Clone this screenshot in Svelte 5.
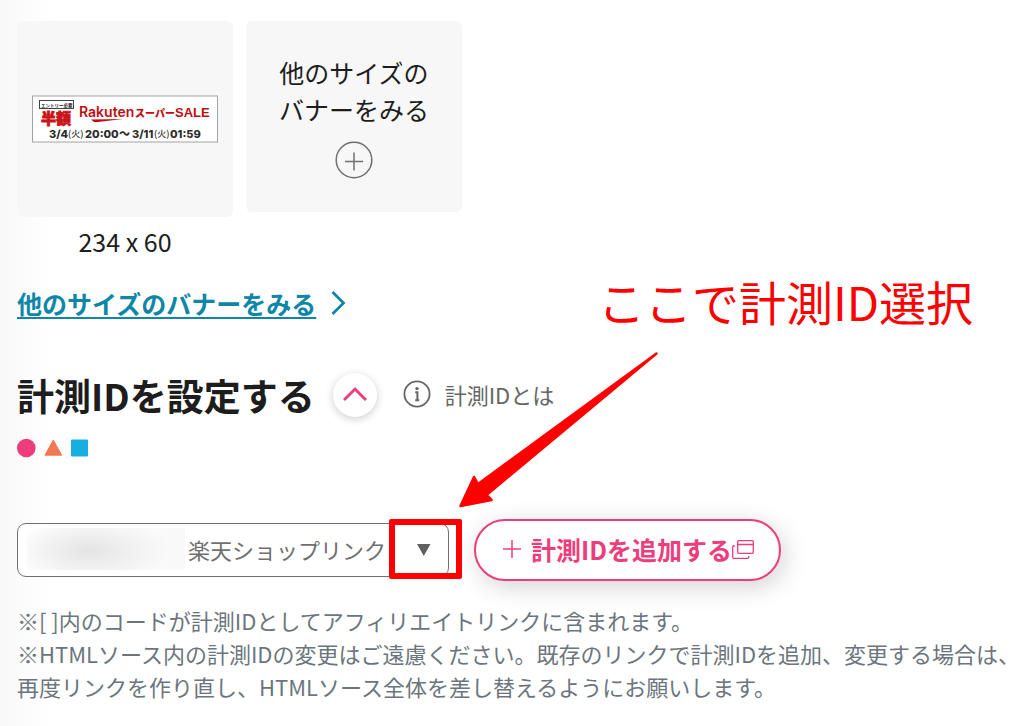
<script>
  let selected = $state('shop');
  let open = $state(true);
</script>

<main class="page">
  <section class="banners">
    <figure class="banner">
      <div class="card preview">
        <svg class="sale" width="186" height="48" viewBox="0 0 186 48" role="img" aria-label="Rakuten スーパーSALE">
          <rect x=".5" y="1" width="185" height="46" fill="#fff" stroke="#a3a3a3" />
          <rect x="7.5" y="5.500" width="34" height="8" fill="#fff" stroke="#444" />
          <text x="9" y="11.500" font-size="4.500" font-weight="700" fill="#222">エントリー必要</text>
          <text x="9" y="29" font-size="15" font-weight="900" fill="#c8141a" stroke="#c8141a" stroke-width=".8">半額</text>
          <text class="latin" x="47" y="22" font-size="14" font-weight="600" fill="#c00d12">Rakuten</text>
          <path d="M59 24.500 L91 24 L66 27 L62 27 Z" fill="#c00d12" />
          <text x="103" y="22" font-size="10" font-weight="900" fill="#c00d12">スーパー</text>
          <text class="arial" x="143" y="22" font-size="13" font-weight="700" fill="#c00d12">SALE</text>
          <g class="latin" font-size="11" font-weight="800" fill="#2d2d2d">
            <text x="17" y="43">3/4</text>
            <text x="53" y="43">20:00</text>
            <text x="87" y="43">〜</text>
            <text x="100" y="43">3/11</text>
            <text x="138" y="43">01:59</text>
          </g>
          <g font-size="9" font-weight="500" fill="#2d2d2d">
            <text x="36" y="42">(火)</text>
            <text x="122" y="42">(火)</text>
          </g>
        </svg>
      </div>
      <figcaption>234 x 60</figcaption>
    </figure>
    <button class="card more" type="button">
      <span>他のサイズの<br />バナーをみる</span>
      <svg width="38" height="38" viewBox="0 0 38 38" fill="none" stroke="#707070" stroke-width="1.500" aria-hidden="true">
        <circle cx="19" cy="19" r="17.800" />
        <path d="M10 20.500h18M19 11.500v18" />
      </svg>
    </button>
  </section>

  <a class="sizes" href="#sizes">
    <span>他のサイズのバナーをみる</span>
    <svg width="16" height="26" viewBox="0 0 16 26" fill="none" stroke="#0e86a8" stroke-width="2.800" aria-hidden="true">
      <path d="M2.500 2 13.500 13 2.500 24" />
    </svg>
  </a>

  <header class="heading">
    <h2>計測IDを設定する</h2>
    <button class="toggle" type="button" aria-label="開閉" aria-expanded={open} onclick={() => (open = !open)}>
      <svg width="24" height="16" viewBox="0 0 24 16" fill="none" stroke="#f03c80" stroke-width="3" aria-hidden="true">
        <path d="M1 14 12 3 23 14" />
      </svg>
    </button>
    <a class="about" href="#about">
      <svg width="28" height="28" viewBox="0 0 28 28" aria-hidden="true">
        <circle cx="14" cy="14" r="12.600" fill="none" stroke="#666" stroke-width="1.800" />
        <circle cx="14" cy="8.600" r="1.700" fill="#666" />
        <path d="M12.200 12.300h2.200v8M12.200 20.300h4" fill="none" stroke="#666" stroke-width="2" />
      </svg>
      計測IDとは
    </a>
  </header>

  <svg class="shapes" width="72" height="20" viewBox="0 0 72 20" aria-hidden="true">
    <circle cx="9.300" cy="10" r="9.300" fill="#ee3d7c" />
    <path d="M36.300 2.500 44.300 17H28.300Z" fill="#f07855" stroke="#f07855" stroke-width="1.500" stroke-linejoin="round" />
    <rect x="54" y="1.500" width="17" height="17" rx="1" fill="#17aee0" />
  </svg>

  <div class="controls">
    <div class="picker">
      <select aria-label="計測ID" bind:value={selected}>
        <option value="shop">楽天ショップリンク</option>
      </select>
      <span class="mask"></span>
      <svg class="caret" width="14" height="12" viewBox="0 0 14 12" aria-hidden="true">
        <path d="M0 0h13.500L6.750 12Z" fill="#606060" />
      </svg>
      <span class="highlight"></span>
      <svg class="arrow" width="200" height="158" viewBox="0 0 200 158" aria-hidden="true">
        <path d="M1.500 156 15 127 19 134 197.500 3.500 27.500 145 32.500 150Z" fill="#f00" stroke="#f00" stroke-width="2.500" stroke-linejoin="round" />
      </svg>
      <strong class="callout">ここで計測ID選択</strong>
    </div>
    <button class="add" type="button">
      <svg width="18" height="18" viewBox="0 0 18 18" fill="none" stroke="#ee3d7c" stroke-width="1.500" aria-hidden="true">
        <path d="M0 9h18M9 0v18" />
      </svg>
      <span>計測IDを追加する</span>
      <svg class="window" width="22" height="19" viewBox="0 0 22 19" fill="none" stroke="#ee3d7c" stroke-width="1.300" aria-hidden="true">
        <rect x="5.700" y=".7" width="15.600" height="12.600" rx="1" />
        <path d="M5.700 4.500h15.600M3 6H1.700q-1 0-1 1v10.300q0 1 1 1h14q1 0 1-1V16" />
      </svg>
    </button>
  </div>

  <p class="notes">
    ※[ ]内のコードが計測IDとしてアフィリエイトリンクに含まれます。<br />
    ※HTMLソース内の計測IDの変更はご遠慮ください。既存のリンクで計測IDを追加、変更する場合は、<br />
    再度リンクを作り直し、HTMLソース全体を差し替えるようにお願いします。
  </p>
</main>

<style>
  :global(body) {
    margin: 0;
    background: #fff;
  }
  .page {
    box-sizing: border-box;
    padding: 21px 17px;
    min-height: 100vh;
    overflow: hidden;
    background: linear-gradient(90deg, #f9f9f9, #fff 56px);
    color: #1d1d1d;
    font-family: 'Noto Sans CJK JP', sans-serif;
  }
  button,
  select {
    font-family: inherit;
    color: inherit;
    margin: 0;
  }
  .banners {
    display: flex;
    align-items: flex-start;
    gap: 13px;
  }
  .banner {
    margin: 0;
    width: 216px;
  }
  .card {
    box-sizing: border-box;
    width: 216px;
    border: 0;
    border-radius: 6px;
    background: #f7f7f7;
    display: flex;
    align-items: center;
    justify-content: center;
  }
  .preview {
    height: 196px;
  }
  .sale {
    font-family: 'Noto Sans CJK JP', sans-serif;
  }
  .latin {
    font-family: Inter, 'Noto Sans CJK JP', sans-serif;
  }
  .arial {
    font-family: 'Liberation Sans', sans-serif;
  }
  figcaption {
    padding-top: 6px;
    font-size: 25px;
    line-height: 36px;
    text-align: center;
  }
  .more {
    height: 191px;
    padding: 0;
    flex-direction: column;
    gap: 13px;
    font-size: 25px;
    line-height: 37px;
  }
  .sizes {
    display: flex;
    align-items: center;
    gap: 14px;
    margin-top: 26px;
    color: #0e86a8;
    font-size: 25px;
    font-weight: 700;
    line-height: 36px;
    text-decoration: none;
  }
  .sizes span {
    text-decoration: underline;
    text-decoration-thickness: 2px;
    text-underline-offset: 3px;
  }
  .heading {
    display: flex;
    align-items: center;
    margin-top: 46px;
  }
  h2 {
    margin: 0;
    font-size: 37px;
    line-height: 56px;
  }
  .toggle {
    display: grid;
    place-items: center;
    width: 44px;
    height: 44px;
    margin-left: 18px;
    padding: 0 0 2px;
    border: 0;
    border-radius: 50%;
    background: #fff;
    box-shadow: 0 2px 8px #0003;
  }
  .about {
    display: flex;
    align-items: center;
    gap: 14px;
    margin-left: 26px;
    padding-bottom: 2px;
    color: #666;
    font-size: 22px;
    line-height: 32px;
    text-decoration: none;
  }
  .shapes {
    display: block;
    margin-top: 15px;
  }
  .controls {
    display: flex;
    align-items: center;
    gap: 25px;
    margin-top: 61px;
  }
  .picker {
    position: relative;
    width: 432px;
  }
  select {
    display: block;
    box-sizing: border-box;
    width: 100%;
    height: 54px;
    padding: 0 60px 2px 170px;
    appearance: none;
    border: 1px solid #707070;
    border-radius: 9px;
    background: #fff;
    color: #707070;
    font-size: 22px;
  }
  .mask {
    position: absolute;
    left: 10px;
    top: 5px;
    width: 158px;
    height: 42px;
    background: radial-gradient(ellipse 80px 34px at 40% 55%, #e4e4e4, #eee 40%, #fafafa00), linear-gradient(90deg, #fff, #f9f9f9);
    pointer-events: none;
  }
  .caret {
    position: absolute;
    left: 400px;
    top: 21px;
    pointer-events: none;
  }
  .highlight {
    position: absolute;
    box-sizing: border-box;
    left: 372px;
    top: -4px;
    width: 73px;
    height: 60px;
    border: 6px solid #f00;
    border-radius: 2px;
    pointer-events: none;
  }
  .arrow {
    position: absolute;
    left: 442px;
    top: -173px;
    pointer-events: none;
  }
  .callout {
    position: absolute;
    left: 581px;
    top: -257px;
    color: #f00;
    font-size: 47px;
    font-weight: 400;
    line-height: 70px;
    white-space: nowrap;
  }
  .add {
    display: flex;
    align-items: center;
    height: 62px;
    padding: 0 25px 2px 27px;
    border: 2px solid #ee3d7c;
    border-radius: 31px;
    background: #fff;
    box-shadow: 4px 6px 24px #0000002b;
    color: #ee3d7c;
    font-size: 25px;
    font-weight: 700;
    line-height: 36px;
    white-space: nowrap;
  }
  .add span {
    margin-left: 10px;
  }
  .notes {
    margin: 23px 0 0;
    color: #6c757d;
    font-size: 22px;
    line-height: 33px;
    white-space: nowrap;
  }
</style>
